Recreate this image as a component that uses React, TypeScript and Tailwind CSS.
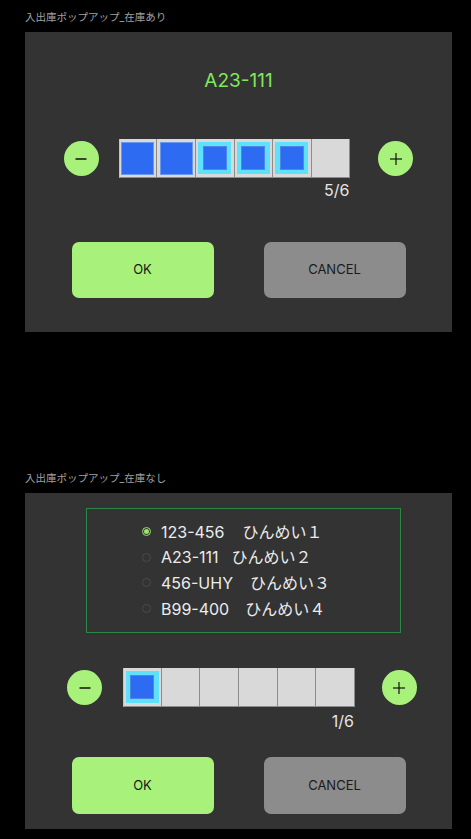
import React from "react";

type CellState = "filled" | "active" | "empty";

const items = [
    { code: "123-456", name: "ひんめい１", gap: "ml-[18px]" },
    { code: "A23-111", name: "ひんめい２", gap: "ml-[13px]" },
    { code: "456-UHY", name: "ひんめい３", gap: "ml-[17px]" },
    { code: "B99-400", name: "ひんめい４", gap: "ml-[16px]" },
];

const font = "font-['Inter','Noto_Sans_CJK_JP',sans-serif]";

function RoundButton({ kind }: { kind: "minus" | "plus" }) {
    return (
        <div className="flex h-[35px] w-[35px] shrink-0 items-center justify-center rounded-full bg-[#a8f27b]">
            <svg width="14" height="14" viewBox="0 0 14 14" fill="none" stroke="#111" strokeWidth={kind === "minus" ? 1.5 : 1.2}>
                <line x1={kind === "minus" ? 1.5 : 1} y1="7" x2={kind === "minus" ? 12.5 : 13} y2="7" />
                {kind === "plus" && <line x1="7" y1="1" x2="7" y2="13" />}
            </svg>
        </div>
    );
}

function Cell({ state, first }: { state: CellState; first?: boolean }) {
    return (
        <div className={`flex h-[39px] w-[38.67px] items-center justify-center border-r border-b border-[#8c8c8c] bg-[#d9d9d9] ${first ? "border-l border-l-[#c4c4c4]" : ""}`}>
            {state === "filled" && <div className="h-[33px] w-[33px] border border-[#6a97f0] bg-[#2d6cf2]" />}
            {state === "active" && (
                <div className="flex h-[32px] w-[33px] items-center justify-center bg-[#5ee1fb]">
                    <div className="h-[24px] w-[24px] border border-[#4f86ea] bg-[#2d6cf2]" />
                </div>
            )}
        </div>
    );
}

function Stepper({ cells, count, className, gapLeft, gapRight, countGap }: { cells: CellState[]; count: string; className?: string; gapLeft: string; gapRight: string; countGap: string }) {
    return (
        <div className={`flex items-start ${className ?? ""}`}>
            <div className={`flex h-[39px] items-center ${gapLeft}`}>
                <RoundButton kind="minus" />
            </div>
            <div className="flex flex-col">
                <div className="flex">
                    {cells.map((c, i) => <Cell key={i} state={c} first={i === 0} />)}
                </div>
                <div className={`${countGap} pr-[1px] text-right text-[16px] leading-[20px] text-[#e4e4e4]`}>{count}</div>
            </div>
            <div className={`flex h-[39px] items-center ${gapRight}`}>
                <RoundButton kind="plus" />
            </div>
        </div>
    );
}

function Buttons({ className }: { className: string }) {
    return (
        <div className={`flex justify-center gap-[50px] ${className}`}>
            <button className="h-full w-[142px] rounded-[7px] bg-[#a8f27b] text-[13px] text-[#1a1a1a]">OK</button>
            <button className="h-full w-[142px] rounded-[7px] bg-[#8c8c8c] text-[13px] text-[#1a1a1a]">CANCEL</button>
        </div>
    );
}

function Label({ children }: { children: React.ReactNode }) {
    return <div className="h-[14px] text-[10.5px] leading-[14px] text-[#a0a0a0]">{children}</div>;
}

export default function App() {
    return (
        <div className={`h-[839px] w-[471px] bg-black pl-[25px] pt-[11px] ${font}`}>
            <Label>入出庫ポップアップ_在庫あり</Label>
            <div className="mt-[7px] flex h-[300px] w-[427px] flex-col bg-[#333333]">
                <div className="mt-[37px] text-center text-[19px] leading-[24px] text-[#80e85a]">A23-111</div>
                <Stepper
                    className="mt-[46px] justify-center"
                    cells={["filled", "filled", "active", "active", "active", "empty"]}
                    count="5/6"
                    gapLeft="mr-[20px]"
                    gapRight="ml-[28px]"
                    countGap="mt-[2px]"
                />
                <Buttons className="mt-[42px] h-[56px]" />
            </div>

            <div className="mt-[140px]">
                <Label>入出庫ポップアップ_在庫なし</Label>
            </div>
            <div className="mt-[7px] flex h-[336px] w-[427px] flex-col bg-[#333333] pt-[15px]">
                <div className="ml-[61px] h-[125px] w-[315px] border border-[#2d8546] pl-[55px] pt-[10px]">
                    {items.map((it, i) => (
                        <div key={it.code} className="flex h-[25.6px] items-center text-[16px] text-[#ececec]">
                            {i === 0 ? (
                                <div className="flex h-[9px] w-[9px] items-center justify-center rounded-full border border-[#9be072]">
                                    <div className="h-[5px] w-[5px] rounded-full bg-[#9be072]" />
                                </div>
                            ) : (
                                <div className="h-[9px] w-[9px] rounded-full border border-[#4a4a4a]" />
                            )}
                            <span className="ml-[10px]">{it.code}</span>
                            <span className={it.gap}>{it.name}</span>
                        </div>
                    ))}
                </div>
                <Stepper
                    className="ml-[42px] mt-[35px]"
                    cells={["active", "empty", "empty", "empty", "empty", "empty"]}
                    count="1/6"
                    gapLeft="mr-[21px]"
                    gapRight="ml-[27px]"
                    countGap="mt-[4px]"
                />
                <Buttons className="mt-[26px] h-[57px]" />
            </div>
        </div>
    );
}
